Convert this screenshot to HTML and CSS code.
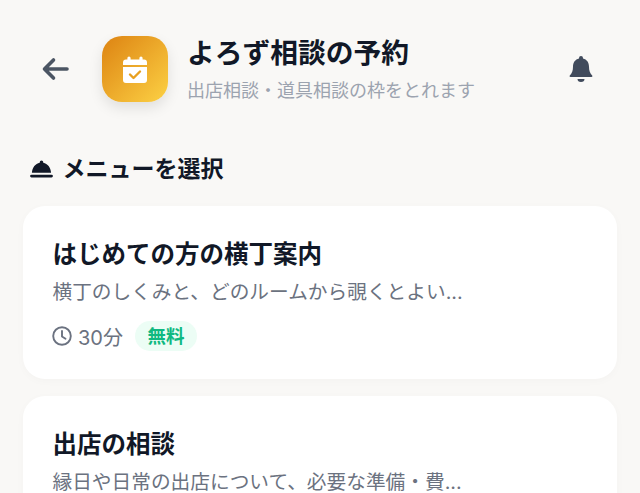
FILE: index.html
```html
<!DOCTYPE html>
<html lang="ja">
<head>
<meta charset="utf-8">
<title>よろず相談の予約</title>
<link rel="stylesheet" href="styles.css">
</head>
<body>
<div class="page">
  <header class="header">
    <svg class="back" viewBox="0 0 28 24" width="28" height="24"><path d="M26 12H4M12.5 3 3.5 12l9 9" fill="none" stroke="#4b5563" stroke-width="3.6" stroke-linecap="round" stroke-linejoin="round"/></svg>
    <div class="logo">
      <svg viewBox="0 0 24 27" width="24" height="27"><path d="M6 0.5a1.6 1.6 0 0 1 1.6 1.6V3.5h8.8V2.1a1.6 1.6 0 0 1 3.2 0V3.5H21a3 3 0 0 1 3 3V9H0V6.500a3 3 0 0 1 3-3h1.400V2.100A1.600 1.600 0 0 1 6 .5zM0 11h24v13a3 3 0 0 1-3 3H3a3 3 0 0 1-3-3z" fill="#fff"/><path d="M7 18.500l3.500 3.500 6.500-6.500" fill="none" stroke="#e8a020" stroke-width="2.400" stroke-linecap="round" stroke-linejoin="round"/></svg>
    </div>
    <div class="heading">
      <h1 class="title">よろず相談の予約</h1>
      <p class="subtitle">出店相談・道具相談の枠をとれます</p>
    </div>
    <svg class="bell" viewBox="0 0 24 28" width="24" height="28"><path d="M12 1a2 2 0 0 1 2 2v.6c3.800.9 6 4 6 8.200 0 4.200 1 6.200 3.200 8.700.5.600.2 1.500-.7 1.500H1.500c-.9 0-1.200-.9-.7-1.500C3 18 4 16 4 11.800c0-4.200 2.200-7.300 6-8.200V3a2 2 0 0 1 2-2zM8.500 24h7a3.500 3 0 0 1-7 0z" fill="#414b5c"/></svg>
  </header>

  <h2 class="section"><svg class="ring" viewBox="0 0 24 20" width="23" height="20"><path d="M12 1a1.800 1.800 0 0 1 1.800 1.800v.8C18.500 4.500 21.500 8.500 22 14H2C2.500 8.500 5.500 4.500 10.200 3.600v-.8A1.800 1.800 0 0 1 12 1zM1.500 16h21a1.200 1.200 0 0 1 0 2.800h-21a1.200 1.200 0 0 1 0-2.800z" fill="#111827"/></svg>メニューを選択</h2>

  <section class="card">
    <h3 class="card-title">はじめての方の横丁案内</h3>
    <p class="card-desc">横丁のしくみと、どのルームから覗くとよい...</p>
    <div class="meta">
      <svg class="clock" viewBox="0 0 20 20" width="20" height="20"><circle cx="10" cy="10" r="8.800" fill="none" stroke="#6b7280" stroke-width="1.900"/><path d="M10 5v5.500l3.500 2.200" fill="none" stroke="#6b7280" stroke-width="1.900" stroke-linecap="round" stroke-linejoin="round"/></svg>
      <span class="time">30分</span>
      <span class="badge">無料</span>
    </div>
  </section>

  <section class="card">
    <h3 class="card-title">出店の相談</h3>
    <p class="card-desc">縁日や日常の出店について、必要な準備・費...</p>
  </section>
</div>
</body>
</html>
```
FILE: styles.css
```css
* { box-sizing: border-box; }
html, body { margin: 0; height: 100%; overflow: hidden; }
body {
  background: #f9f8f6;
  font-family: Inter, "Noto Sans CJK JP", sans-serif;
  color: #111827;
}
.page { padding: 36px 23px 0; }
.header { display: flex; align-items: center; height: 66px; }
.back { margin-left: 18px; margin-right: 33px; flex: none; }
.logo {
  width: 66px; height: 66px; flex: none;
  border-radius: 20px;
  background: linear-gradient(135deg, #dd8312, #fcd144);
  box-shadow: 0 6px 14px rgba(0,0,0,.1);
  display: flex; align-items: center; justify-content: center;
}
.heading { margin-left: 19px; flex: 1; }
.title { margin: 0; font-size: 27.750px; line-height: 34px; font-weight: 700; }
.subtitle { margin: 9px 0 0; font-size: 18px; line-height: 24px; color: #9ca3af; }
.bell { margin-right: 24px; flex: none; }
.section {
  margin: 51px 0 0 6.500px;
  display: flex; align-items: center; gap: 10px;
  font-size: 23px; line-height: 32px; font-weight: 700;
}
.card {
  margin-top: 17px;
  background: #fff;
  border-radius: 22px;
  padding: 30px 30px 28px 29.500px;
  box-shadow: 0 2px 10px rgba(0,0,0,.025);
}
.section + .card { margin-top: 21px; }
.card-title { margin: 0; font-size: 24.500px; line-height: 36px; font-weight: 700; }
.card-desc { margin: 6px 0 0; font-size: 19.700px; line-height: 28px; color: #6b7280; white-space: nowrap; }
.meta { margin-top: 15px; display: flex; align-items: center; height: 30px; color: #6b7280; font-size: 20px; }
.clock { margin-left: -.5px; }
.time { margin-left: 6px; }
.badge {
  margin-left: 12px; padding: 0 12.500px; height: 30px; line-height: 30px;
  border-radius: 15px;
  background: #ecfdf5; color: #10b981;
  font-size: 18.500px; font-weight: 700;
}
```
